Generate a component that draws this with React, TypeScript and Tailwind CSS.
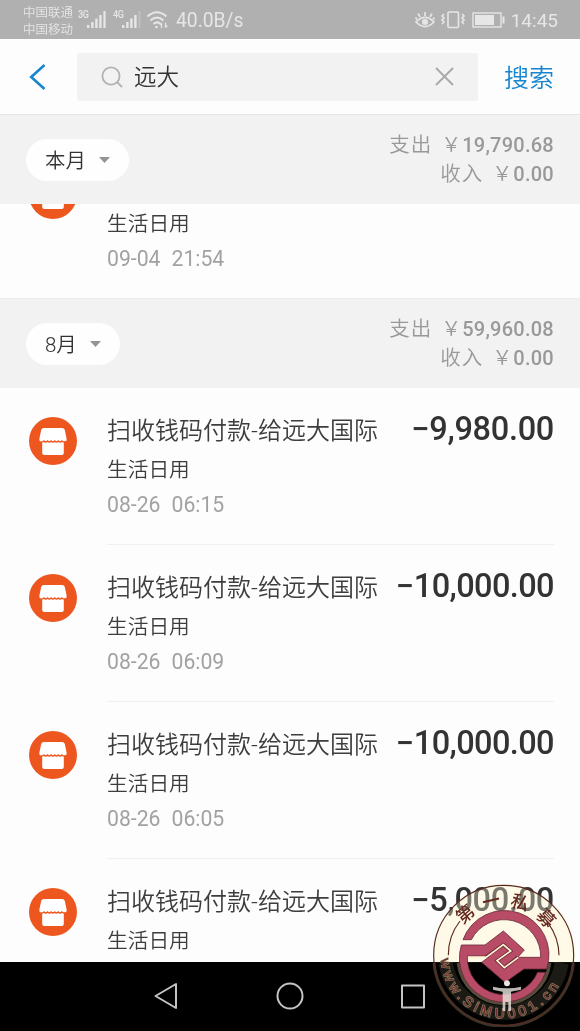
import type { ReactNode } from 'react';
import clsx from 'clsx';

interface Entry {
  title: string;
  category: string;
  date?: string;
  time?: string;
  amount: string;
}

const entries: Entry[] = [
  { title: '扫收钱码付款-给远大国际', category: '生活日用', date: '08-26', time: '06:15', amount: '9,980.00' },
  { title: '扫收钱码付款-给远大国际', category: '生活日用', date: '08-26', time: '06:09', amount: '10,000.00' },
  { title: '扫收钱码付款-给远大国际', category: '生活日用', date: '08-26', time: '06:05', amount: '10,000.00' },
  { title: '扫收钱码付款-给远大国际', category: '生活日用', amount: '5,000.00' },
];

const Signal = ({ label }: { label: string }) => (
  <div className="flex h-5 items-start">
    <span className="w-[9px] origin-left scale-x-90 text-[10px] leading-[10px] font-medium tracking-tighter">{label}</span>
    <svg width="20" height="20" viewBox="0 0 20 20" fill="currentColor">
      <rect x="0" y="15" width="2.4" height="3" />
      <rect x="4.2" y="12" width="2.4" height="6" />
      <rect x="8.2" y="8.5" width="2.4" height="9.5" />
      <rect x="12.2" y="5" width="2.4" height="13" />
      <rect x="16.4" y="1" width="2.2" height="17" opacity={label === '3G' ? 1 : 0.25} />
    </svg>
  </div>
);

const StatusBar = () => (
  <div className="flex h-[39px] shrink-0 items-center bg-[#b0b0b0] pr-[22px] pl-[23px] text-[#e6e6e6]">
    <div className="w-[55px] pt-[2px] text-[12.5px] leading-[17px] font-[350] whitespace-nowrap">
      <div>中国联通</div>
      <div>中国移动</div>
    </div>
    <div className="flex gap-[6px]">
      <Signal label="3G" />
      <Signal label="4G" />
    </div>
    <svg className="ml-[4px]" width="24" height="20" viewBox="0 0 24 20" fill="none" stroke="currentColor" strokeWidth="2">
      <path d="M1.5 6.5Q11 -2 20.5 6.5M4.5 10.5Q11 4.5 17.5 10.5M7.5 14Q11 11 14 13.5" />
      <circle cx="10.5" cy="17" r="1.3" fill="currentColor" stroke="none" />
      <path d="M15.5 18v-5m-1.8 2 1.8-2M19.5 12.5v5m1.8-2-1.8 2" strokeWidth="1.3" />
    </svg>
    <span className="ml-[6px] pt-[3px] text-[19.3px] leading-none">40.0B/s</span>
    <div className="ml-auto flex items-center">
      <svg width="20" height="18" viewBox="0 0 20 18" fill="none" stroke="currentColor" strokeWidth="1.7">
        <path d="M1 11Q10 2 19 11Q10 20 1 11Z" />
        <path d="M10 5V1M5 6 3 2.5M15 6l2-3.5M2 8.5.5 6.5M18 8.5l1.5-2" />
        <circle cx="10" cy="11" r="2.2" fill="currentColor" />
      </svg>
      <svg className="ml-[6px]" width="24" height="20" viewBox="0 0 24 20" fill="none" stroke="currentColor" strokeWidth="1.6">
        <rect x="7" y="2" width="10.5" height="15.5" rx="1" />
        <path d="m3 4-2 2 2 2-2 2 2 2-2 2M21 4l2 2-2 2 2 2-2 2 2 2" />
      </svg>
      <svg className="ml-[7px]" width="33" height="18" viewBox="0 0 33 18" fill="none" stroke="currentColor" strokeWidth="1.4">
        <rect x="1" y="2" width="28" height="14" />
        <rect x="3" y="4" width="19" height="10" fill="currentColor" stroke="none" />
        <path d="M31.5 5.5v7" strokeWidth="2" />
      </svg>
      <span className="ml-[6px] pt-[2px] text-[19px] leading-none">14:45</span>
    </div>
  </div>
);

const SearchBar = () => (
  <div className="flex h-[76px] shrink-0 items-center border-b border-[#e6e6e6] bg-[#fdfdfd] pr-[26px] pl-[28px]">
    <svg width="18" height="26" viewBox="0 0 18 26" fill="none" stroke="#1785d0" strokeWidth="2.6">
      <path d="M16.5 1 3.2 13l13.3 12" />
    </svg>
    <div className="ml-[31px] flex h-12 w-[401px] items-center rounded-xs bg-[#f2f2f2] pr-[24px] pl-[24px]">
      <svg width="22" height="22" viewBox="0 0 22 22" fill="none" stroke="#b2b2b2" strokeWidth="1.8">
        <circle cx="10" cy="10" r="8.6" />
        <path d="m16 16 5 5" />
      </svg>
      <span className="ml-[11px] pt-[3px] text-[22.5px] font-[350] text-[#333]">远大</span>
      <svg className="ml-auto" width="19" height="19" viewBox="0 0 19 19" fill="none" stroke="#a8a8a8" strokeWidth="1.8">
        <path d="m1 1 17 17M18 1 1 18" />
      </svg>
    </div>
    <span className="ml-auto pt-[4px] text-[25px] font-[350] text-[#1785d0]">搜索</span>
  </div>
);

interface MonthHeaderProps {
  label: string;
  expense: string;
  income: string;
}

const Total = ({ label, value }: { label: string; value: string }) => (
  <div className="flex items-center">
    <span className="mr-[9px] text-[20.5px] tracking-[1px]">{label}</span>
    <span className="mr-px">￥</span>
    <span className="text-[20px] font-medium tracking-[0.25px]">{value}</span>
  </div>
);

const MonthHeader = ({ label, expense, income }: MonthHeaderProps) => (
  <div className="flex h-[89px] shrink-0 items-center justify-between bg-[#f2f2f2] pr-[26px] pl-[26px]">
    <div className="flex h-[42px] items-center rounded-full bg-[#fefefe] pr-[19px] pl-[19px] text-[20.5px] font-[350] text-[#333]">
      <span className="pt-[3px]">{label}</span>
      <svg className="ml-[13px]" width="11" height="6" viewBox="0 0 11 6" fill="#949494">
        <path d="M0 0h11L5.5 6z" />
      </svg>
    </div>
    <div className="flex flex-col items-end text-[20px] leading-[29px] font-[350] text-[#999]">
      <Total label="支出" value={expense} />
      <Total label="收入" value={income} />
    </div>
  </div>
);

const ShopIcon = () => (
  <svg className="shrink-0" width="48" height="48" viewBox="0 0 48 48">
    <circle cx="24" cy="24" r="24" fill="#ee5620" />
    <path
      d="M15 11h18q2.300 0 2.800 2l1.800 8.500q.4 3.500-2.800 3.500V36q0 2-2 2H15.200q-2 0-2-2V25q-3.200 0-2.800-3.500L12.200 13q.5-2 2.800-2Z"
      fill="#fff"
    />
    <path
      d="M10.500 24.800q2.500.8 4.500-.8 1.700 2 3.500 0 1.800 2 3.600 0 1.800 2 3.600 0 1.800 2 3.600 0 1.800 2 3.600 0 1.600 1.500 4.600.8"
      fill="none"
      stroke="#ee5620"
      strokeWidth="1.300"
    />
  </svg>
);

const EntryMeta = ({ entry }: { entry: Entry }) => (
  <>
    <div className="text-[20.7px] leading-[32px] font-[350] text-[#3d3d3d]">{entry.category}</div>
    {entry.date && (
      <div className="mt-[3px] flex gap-[11px] text-[21.200px] leading-[32px] text-[#a2a2a2]">
        <span>{entry.date}</span>
        <span>{entry.time}</span>
      </div>
    )}
  </>
);

interface RowProps {
  last?: boolean;
  icon: ReactNode;
  entry: Entry;
}

const EntryRow = ({ entry, icon, last }: RowProps) => (
  <div className="flex h-[157px] shrink-0 pl-[29px]">
    <div className="pt-[29px]">{icon}</div>
    <div className={clsx('mr-[26px] ml-[30px] flex-1 pt-[25px]', !last && 'border-b border-[#f0f0f0]')}>
      <div className="flex h-9 items-center justify-between whitespace-nowrap text-[#3d3d3d]">
        <span className="text-[24px] font-[350]">{entry.title}</span>
        <span
          className={clsx(
            '-mt-[3px] text-[32.500px] font-medium text-[#333]',
            entry.amount.length > 8 ? 'tracking-[-0.6px]' : 'tracking-[-0.3px]'
          )}
        >
          <span className="mr-px inline-block w-[17px] text-center">−</span>
          {entry.amount}
        </span>
      </div>
      <div className="mt-[5px]">
        <EntryMeta entry={entry} />
      </div>
    </div>
  </div>
);

const NavBar = () => (
  <div className="h-[69px] shrink-0 bg-black">
    <svg width="580" height="69" viewBox="0 0 580 69" fill="none" stroke="#c4c4c4" strokeWidth="2" strokeLinejoin="round">
      <path d="M176 22v24L155.500 34Z" />
      <circle cx="290" cy="34" r="12.500" />
      <rect x="402" y="23.500" width="22" height="22" />
    </svg>
  </div>
);

const sealGlyphs = [
  { char: '第', x: 136, y: 132, angle: -40 },
  { char: '一', x: 213, y: 93, angle: -13 },
  { char: '私', x: 300, y: 98, angle: 17 },
  { char: '募', x: 378, y: 145, angle: 46 },
];

const Seal = () => (
  <>
    <div className="absolute top-[884px] left-[433px] size-[142px] rounded-full bg-[#fffbe8] mix-blend-multiply" />
    <svg className="absolute top-[883px] left-[432px]" width="144" height="144" viewBox="36 39 432 432">
      <defs>
        <path id="seal-arc" d="M62 256A189 189 0 0 0 440 256" />
        <clipPath id="seal-top">
          <rect x="36" y="39" width="432" height="238" />
        </clipPath>
      </defs>
      <circle cx="251" cy="256" r="210" fill="#fffbe8" fillOpacity="0.35" clipPath="url(#seal-top)" />
      <g fill="none" stroke="#5d5543">
        <path d="M42 279A210 210 0 0 0 460 279" strokeWidth="9" opacity="0.6" />
        <path d="M77 279A176 176 0 0 0 425 279" strokeWidth="42" opacity="0.3" />
        <path d="M115 279A138 138 0 0 0 389 279" strokeWidth="10" opacity="0.9" />
      </g>
      <g fill="none" stroke="#5b2b20" strokeWidth="3.500">
        <circle cx="251" cy="256" r="210" />
        <path d="M85 256A166 166 0 0 1 120 153M417 256A166 166 0 0 0 385 160" />
      </g>
      <g fill="#64291f" fontSize="54" fontWeight="500" textAnchor="middle" fontFamily="'Noto Sans CJK SC', sans-serif">
        {sealGlyphs.map((g) => (
          <text key={g.char} transform={`translate(${g.x} ${g.y}) rotate(${g.angle})`} y="19">
            {g.char}
          </text>
        ))}
      </g>
      <text
        fontSize="42"
        letterSpacing="12"
        fontFamily="'Liberation Sans', sans-serif"
        fill="#6b2f2a"
        stroke="#857a62"
        strokeWidth="4"
        paintOrder="stroke"
      >
        <textPath href="#seal-arc" startOffset="12">
          www.SiMU001.cn
        </textPath>
      </text>
      <g transform="translate(105 105)" strokeLinejoin="miter">
        <g fill="#b84c67" stroke="#6c2b3b" strokeWidth="2.500">
          <path d="M24 104A133 133 0 0 1 275 192H207L150 232 80 172 100 157 188 157H257A110 110 0 0 0 49 104Z" />
          <path d="M19 120H90L145 78 208 135 187 158 148 190 95 153H37A110 110 0 0 0 248 202H272A133 133 0 0 1 19 120Z" />
        </g>
        <path d="M84 172 143 124 160 150 207 178 205 190 150 230Z" fill="#b84c67" />
        <path d="M92 156 145 119 167 138 126 167 148 188 188 157" fill="none" stroke="#6c2b3b" strokeWidth="10" />
        <path d="M39 157H93L145 119 167 138 126 167 148 188 190 157" fill="none" stroke="#fff2cf" strokeWidth="5" />
      </g>
      {/* accessibility key of the nav bar shows through the seal */}
      <g fill="#e8e6e0">
        <circle cx="261" cy="340" r="9" />
        <path d="M219 350q42 10 84 0v9q-26 5-30 6v58h-8v-27h-9v27h-8v-58q-8-2-29-6Z" opacity="0.8" />
      </g>
    </svg>
  </>
);

const partialEntry: Entry = { title: '', category: '生活日用', date: '09-04', time: '21:54', amount: '' };

export default function App() {
  return (
    <div className="relative flex h-[1031px] w-[580px] flex-col overflow-hidden bg-[#fdfdfd] font-[Roboto,'Noto_Sans_CJK_SC',sans-serif]">
      <StatusBar />
      <SearchBar />
      <MonthHeader label="本月" expense="19,790.68" income="0.00" />
      {/* row scrolled halfway under the sticky month header */}
      <div className="flex h-[95px] shrink-0 items-start overflow-hidden border-b border-[#ececec] pl-[29px]">
        <div className="-mt-[33px]">
          <ShopIcon />
        </div>
        <div className="ml-[30px] pt-[4px]">
          <EntryMeta entry={partialEntry} />
        </div>
      </div>
      <MonthHeader label="8月" expense="59,960.08" income="0.00" />
      <div className="flex min-h-0 flex-1 flex-col overflow-hidden">
        {entries.map((entry, i) => (
          <EntryRow key={i} entry={entry} icon={<ShopIcon />} last={i === entries.length - 1} />
        ))}
      </div>
      <NavBar />
      <Seal />
    </div>
  );
}
